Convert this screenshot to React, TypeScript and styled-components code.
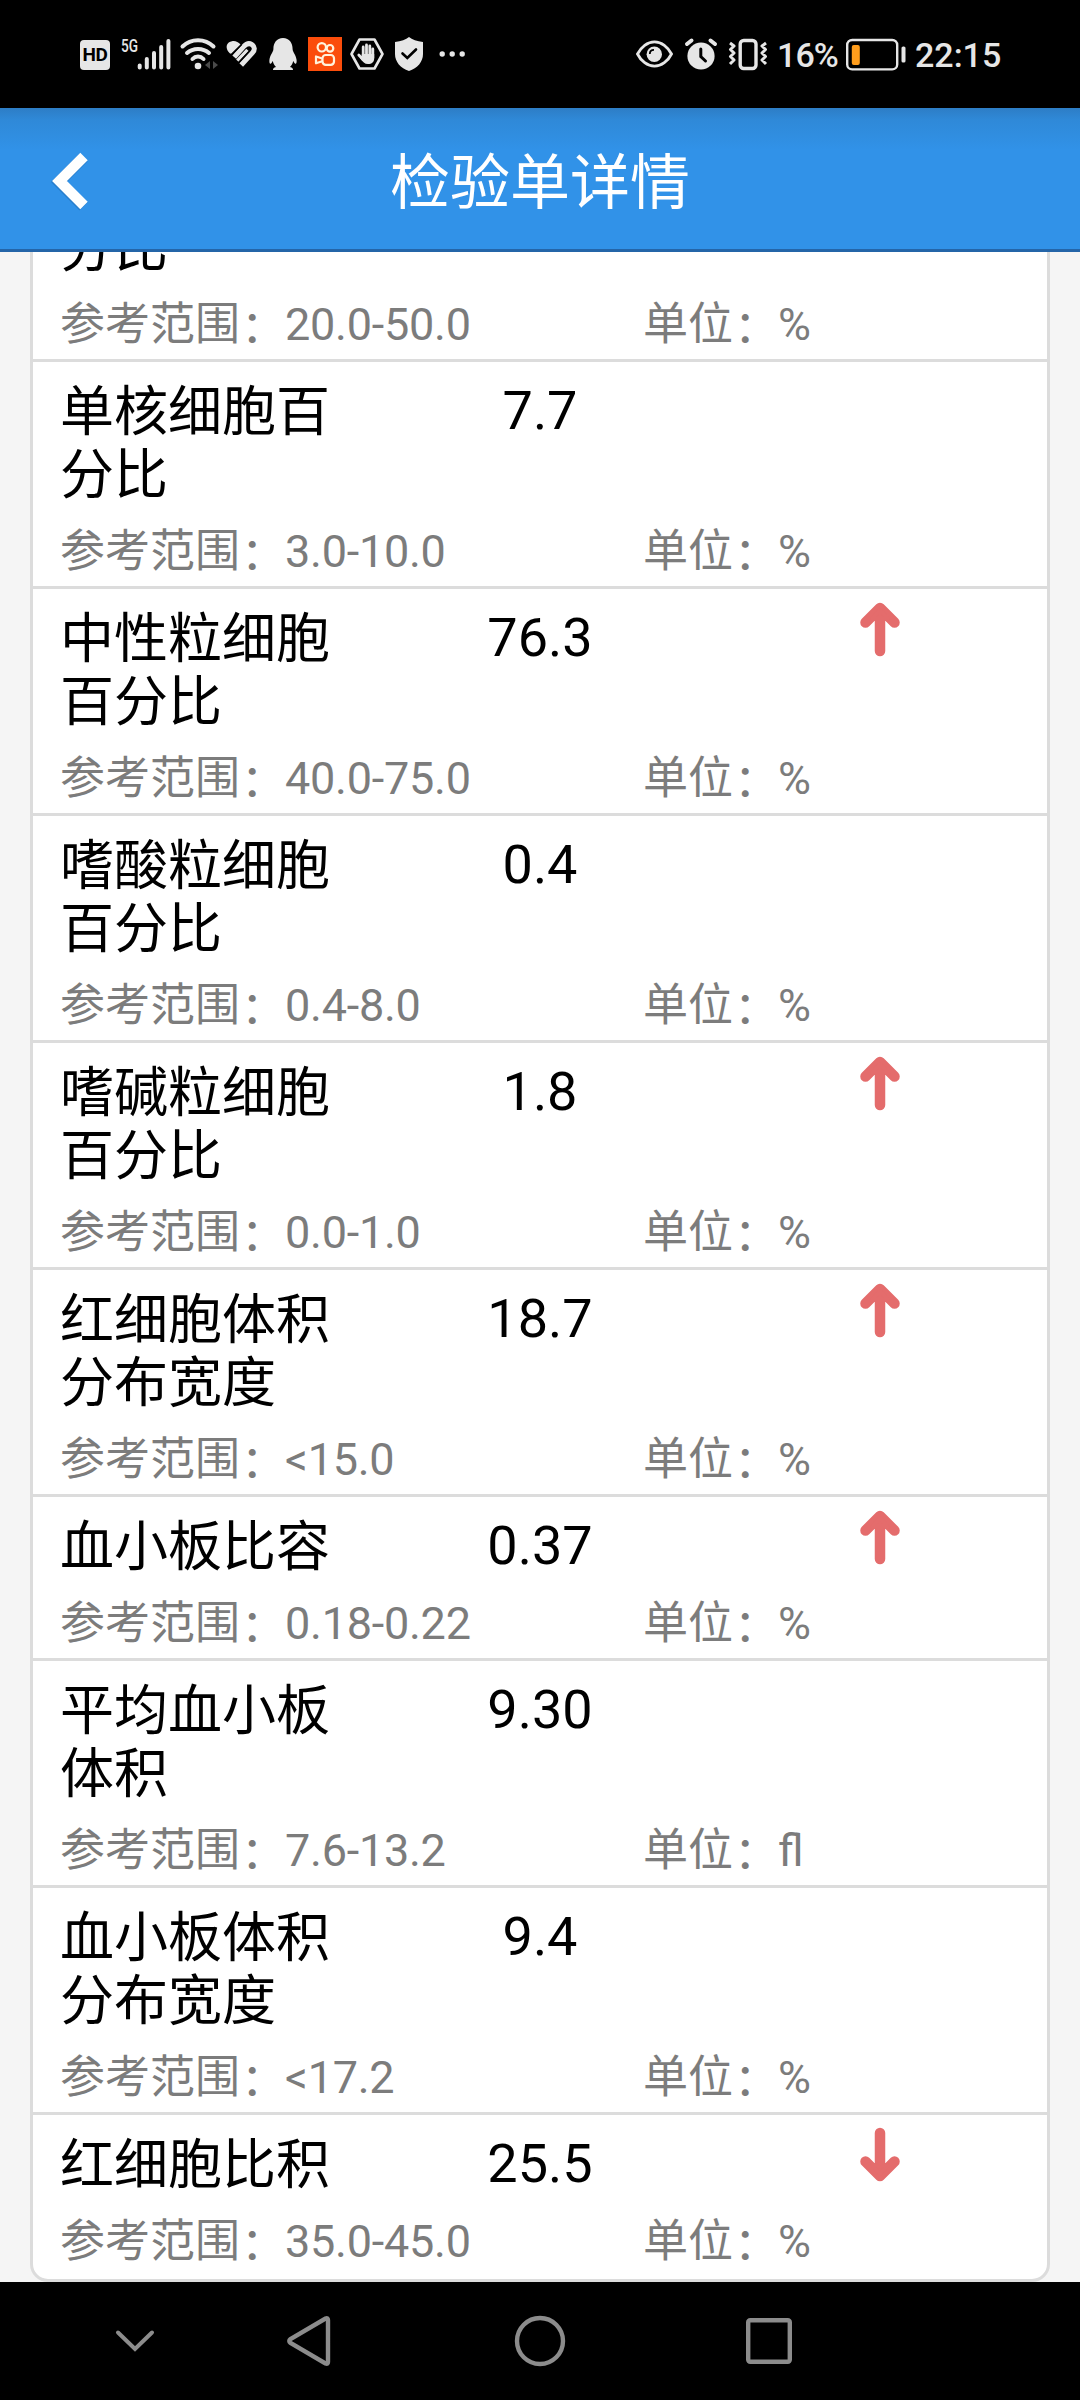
import React from "react";
import styled, { createGlobalStyle } from "styled-components";

const GlobalStyle = createGlobalStyle`
  html, body { margin: 0; padding: 0; background: #000; }
  *, *::before, *::after { box-sizing: border-box; }
`;

const Screen = styled.div`
  width: 1080px;
  height: 2400px;
  display: flex;
  flex-direction: column;
  overflow: hidden;
  background: #000;
  font-family: Roboto, "Noto Sans CJK SC", sans-serif;
`;

const StatusBar = styled.div`
  flex: none;
  height: 108px;
  padding: 0 80px;
  display: flex;
  justify-content: space-between;
  align-items: center;
  color: #e6e6e6;
`;

const StatusGroup = styled.div`
  display: flex;
  align-items: center;
  height: 34px;
`;

const Glyph = styled.svg<{ $gap?: number }>`
  display: block;
  flex: none;
  overflow: visible;
  margin-left: ${(p) => p.$gap ?? 0}px;
`;

const HdBadge = styled.span`
  width: 30px;
  height: 30px;
  margin-top: 2px;
  border-radius: 4px;
  background: #e6e6e6;
  color: #000;
  display: flex;
  align-items: center;
  justify-content: center;
  font-size: 19px;
  letter-spacing: -0.5px;
  font-weight: 700;
  line-height: 30px;
`;

const StatusText = styled.span<{ $gap: number; $width: number; $tracking?: number }>`
  margin-left: ${(p) => p.$gap}px;
  width: ${(p) => p.$width}px;
  font-size: 34px;
  line-height: 40px;
  padding-top: 2px;
  font-weight: 500;
  letter-spacing: ${(p) => p.$tracking ?? 0}px;
  white-space: nowrap;
`;

const Header = styled.header`
  flex: none;
  height: 144px;
  border-bottom: 3px solid #2465a8;
  background: linear-gradient(#2d7dc6 0, #2f89d8 12px, #3192e8 42px);
  display: grid;
  grid-template-columns: 140px 1fr 140px;
  align-items: center;
`;

const BackButton = styled.button`
  border: 0;
  padding: 5px 0 0 50px;
  background: none;
  display: flex;
`;

const Title = styled.h1`
  margin: 0;
  padding-top: 11px;
  text-align: center;
  color: #fff;
  font-size: 60px;
  line-height: 72px;
  font-weight: 400;
`;

const Viewport = styled.main`
  flex: none;
  height: 2030px;
  padding: 0 30px;
  background: #f5f5f5;
  overflow: hidden;
  display: flex;
  flex-direction: column;
  justify-content: flex-end;
`;

const Card = styled.section`
  flex: none;
  border: 3px solid #dcdcdc;
  border-radius: 18px;
  background: #fff;
`;

const Row = styled.article`
  padding: 17px 27px 8px;
  border-bottom: 3px solid #dcdcdc;
  &:last-child {
    border-bottom-color: transparent;
  }
`;

const Result = styled.div`
  display: grid;
  grid-template-columns: 290px 380px 1fr;
  align-items: start;
  color: #000;
  font-size: 54px;
  line-height: 63px;
`;

const Name = styled.div`
  padding-top: 2px;
  margin-bottom: -2px;
  white-space: pre-line;
`;

const Value = styled.div`
  text-align: center;
`;

const Flag = styled.div`
  height: 54px;
  margin-top: -4px;
  padding-left: 130px;
`;

const Meta = styled.div`
  display: grid;
  grid-template-columns: 583px 1fr;
  margin-top: 20px;
  color: #7c7c7c;
  font-size: 45px;
  line-height: 53px;
  white-space: nowrap;
`;

const Colon = styled.span`
  display: inline-block;
  transform: translate(1px, 3px);
`;

const Figures = styled.span`
  letter-spacing: -0.25px;
`;

const NavBar = styled.nav`
  flex: none;
  height: 118px;
  padding-left: 116px;
  display: flex;
  align-items: center;
`;

type Item = {
  name: string;
  value?: string;
  range: string;
  unit: string;
  flag?: "up" | "down";
};

const items: Item[] = [
  { name: "分比", range: "20.0-50.0", unit: "%" },
  { name: "单核细胞百\n分比", value: "7.7", range: "3.0-10.0", unit: "%" },
  { name: "中性粒细胞\n百分比", value: "76.3", range: "40.0-75.0", unit: "%", flag: "up" },
  { name: "嗜酸粒细胞\n百分比", value: "0.4", range: "0.4-8.0", unit: "%" },
  { name: "嗜碱粒细胞\n百分比", value: "1.8", range: "0.0-1.0", unit: "%", flag: "up" },
  { name: "红细胞体积\n分布宽度", value: "18.7", range: "<15.0", unit: "%", flag: "up" },
  { name: "血小板比容", value: "0.37", range: "0.18-0.22", unit: "%", flag: "up" },
  { name: "平均血小板\n体积", value: "9.30", range: "7.6-13.2", unit: "fl" },
  { name: "血小板体积\n分布宽度", value: "9.4", range: "<17.2", unit: "%" },
  { name: "红细胞比积", value: "25.5", range: "35.0-45.0", unit: "%", flag: "down" },
];

const Arrow = ({ down }: { down: boolean }) => (
  <Glyph width="40" height="54" viewBox="0 0 40 54">
    <g
      transform={down ? "matrix(1 0 0 -1 0 54)" : undefined}
      stroke="#e46c6c"
      strokeWidth="10.5"
      strokeLinecap="round"
      strokeLinejoin="round"
      fill="none"
    >
      <path d="M20 9V49" />
      <path d="M5.5 20.5 20 6 34.5 20.5" />
      <path d="M12 17 20 8 28 17Z" fill="#e46c6c" strokeWidth="4" />
    </g>
  </Glyph>
);

const LeftStatus = () => (
  <StatusGroup>
    <HdBadge>HD</HdBadge>
    <Glyph $gap={10} width="52" height="34" viewBox="0 0 52 34">
      <text x="1" y="15" fontSize="18" fontWeight="500" fill="#e6e6e6" textLength="17" lengthAdjust="spacingAndGlyphs">
        5G
      </text>
      <g stroke="#e6e6e6" strokeWidth="4" strokeLinecap="round">
        <path d="M19.7 28.5V30.5M26.8 22V30.5M34 16V30.5M41.2 10V30.5M48.4 4V30.5" />
      </g>
    </Glyph>
    <Glyph $gap={8} width="38" height="34" viewBox="0 0 38 34">
      <g fill="none" stroke="#e6e6e6" strokeWidth="4" strokeLinecap="round">
        <path d="M2.5 9.5C11 1 25 1 33.5 9.5" />
        <path d="M7 16C13 10.5 23 10.5 29 16" />
        <path d="M12.5 22C15.5 18.8 20.5 18.8 23.5 22" />
      </g>
      <circle cx="18" cy="29" r="3.3" fill="#e6e6e6" />
      <path d="M30 24V32L25 28ZM33 24V32L38 28Z" fill="#4a4a4a" />
    </Glyph>
    <Glyph $gap={8} width="31" height="34" viewBox="0 0 31 34">
      <path d="M2.6 15C-1.2 10 .8 5 6 4.2C9.500 3.600 12 5 14.600 7.400L5.400 16.600Q4 17 2.600 15Z" fill="#e6e6e6" />
      <path d="M8.200 20.200 17.600 9.600C20 7 23 5.800 25.600 7.400C29 9.600 29 13 26.600 15.600L15.200 28" fill="none" stroke="#e6e6e6" strokeWidth="5" />
      <path d="M11.300 23.600 21.500 12.800" stroke="#e6e6e6" strokeWidth="3.200" />
      <path d="M12.800 25.400 23 14.400M5.600 17.800 15.600 7.400" stroke="#000" strokeWidth="1.400" />
    </Glyph>
    <Glyph $gap={12} width="28" height="34" viewBox="0 0 28 34">
      <path
        fill="#e6e6e6"
        d="M14 1C7.5 1 4.4 6 4.4 12C4.4 15 1 18 .4 23C.2 26 .8 27.2 1.7 26.7C2.5 26.3 3.4 24.5 3.8 24C4.4 27 5.5 28.5 7 30C4.5 30.8 4 31.5 4 33H24C24 31.5 23.5 30.8 21 30C22.5 28.5 23.6 27 24.2 24C24.6 24.5 25.5 26.3 26.3 26.7C27.2 27.2 27.8 26 27.6 23C27 18 23.6 15 23.6 12C23.6 6 20.5 1 14 1Z"
      />
    </Glyph>
    <Glyph $gap={11} width="34" height="34" viewBox="0 0 34 34">
      <rect width="34" height="34" fill="#fb4d0b" />
      <g fill="none" stroke="#fff3dc" strokeWidth="2.2" strokeLinejoin="round">
        <circle cx="13.8" cy="10.3" r="4.2" />
        <circle cx="22" cy="11.3" r="3.3" />
        <rect x="14.5" y="18" width="11.5" height="9.8" rx="3.2" />
        <path d="M14.2 21.5 8 19.5V26.3L14.2 24.3" />
      </g>
    </Glyph>
    <Glyph $gap={8} width="34" height="34" viewBox="0 0 34 34">
      <path d="M9.5 2.5H24.5L32.5 17L24.5 31.5H9.5L1.5 17Z" fill="none" stroke="#e6e6e6" strokeWidth="2.6" strokeLinejoin="round" />
      <g stroke="#e6e6e6" strokeWidth="2.8" strokeLinecap="round">
        <path d="M13.2 10V20M16.5 8V20M19.8 9V20M22.8 12V21M8.8 18 13 22.5" />
      </g>
      <path d="M11.8 17H24.2V21C24.2 25 22 27 18 27C14.5 27 13 25 10 21L11.8 21Z" fill="#e6e6e6" />
    </Glyph>
    <Glyph $gap={10} width="30" height="34" viewBox="0 0 30 34">
      <path d="M15 0C18 2.5 23 4.3 29 5V17C29 25 23.5 31 15 34C6.5 31 1 25 1 17V5C7 4.3 12 2.5 15 0Z" fill="#e6e6e6" />
      <path d="M8.5 16.5 13.3 21 22 12.5" fill="none" stroke="#000" strokeWidth="2.6" strokeLinecap="round" />
    </Glyph>
    <Glyph $gap={15} width="26" height="34" viewBox="0 0 26 34" fill="#e6e6e6">
      <circle cx="3.2" cy="17" r="2.7" />
      <circle cx="13.2" cy="17" r="2.7" />
      <circle cx="23.2" cy="17" r="2.7" />
    </Glyph>
  </StatusGroup>
);

const RightStatus = () => (
  <StatusGroup>
    <Glyph width="37" height="34" viewBox="0 0 37 34">
      <path d="M1.5 17C5 10 11.5 4.8 18.5 4.8S32 10 35.5 17C32 24 25.5 29.2 18.5 29.2S5 24 1.5 17Z" fill="none" stroke="#e6e6e6" strokeWidth="2.8" />
      <circle cx="18.3" cy="17.3" r="7.7" fill="#e6e6e6" />
      <path d="M13.8 17C13.8 14.5 15.5 12.8 18 12.8" fill="none" stroke="#000" strokeWidth="1.8" />
    </Glyph>
    <Glyph $gap={12} width="32" height="34" viewBox="0 0 32 34">
      <circle cx="16" cy="19" r="13.6" fill="#e6e6e6" />
      <path d="M15.8 12V19.5L20.5 24" fill="none" stroke="#000" strokeWidth="3" strokeLinecap="round" />
      <path d="M2 7 6.5 3.5M30 7 25.5 3.5" stroke="#e6e6e6" strokeWidth="4" strokeLinecap="round" />
    </Glyph>
    <Glyph $gap={12} width="38" height="34" viewBox="0 0 38 34">
      <g fill="none" stroke="#e6e6e6" strokeWidth="3.4">
        <rect x="11.2" y="3.5" width="15.8" height="28" rx="3.5" />
        <path
          d="M1 6 5 9 1.5 12.5 5 16 1.5 19.5 5 23 1 27M37 6 33 9 36.5 12.5 33 16 36.5 19.5 33 23 37 27"
          strokeWidth="3"
          strokeLinejoin="round"
        />
      </g>
    </Glyph>
    <StatusText $gap={10} $width={62} $tracking={-0.9}>16%</StatusText>
    <Glyph $gap={7} width="60" height="34" viewBox="0 0 60 34">
      <rect x="1.2" y="3" width="50" height="29.4" rx="5" fill="none" stroke="#e6e6e6" strokeWidth="2.4" />
      <rect x="5.8" y="8" width="8" height="20" rx="2" fill="#ff9d1c" />
      <rect x="55.5" y="9.500" width="4" height="16" rx="1.6" fill="#e6e6e6" />
    </Glyph>
    <StatusText $gap={9} $width={85}>22:15</StatusText>
  </StatusGroup>
);

export default function App() {
  return (
    <Screen>
      <GlobalStyle />
      <StatusBar>
        <LeftStatus />
        <RightStatus />
      </StatusBar>
      <Header>
        <BackButton aria-label="返回">
          <Glyph width="40" height="60" viewBox="0 0 40 60">
            <path d="M33.5 6.5 9 31 33.5 55.500" fill="none" stroke="#1b5c9d" strokeOpacity=".35" strokeWidth="11.5" />
            <path d="M34 5.5 9.5 30 34 54.5" fill="none" stroke="#fff" strokeWidth="10.5" />
          </Glyph>
        </BackButton>
        <Title>检验单详情</Title>
      </Header>
      <Viewport>
        <Card>
          {items.map((item) => (
            <Row key={item.name + item.range}>
              <Result>
                <Name>{item.name}</Name>
                <Value>{item.value}</Value>
                {item.flag && (
                  <Flag>
                    <Arrow down={item.flag === "down"} />
                  </Flag>
                )}
              </Result>
              <Meta>
                <span>
                  参考范围<Colon>：</Colon>
                  <Figures>{item.range}</Figures>
                </span>
                <span>
                  单位<Colon>：</Colon>
                  {item.unit}
                </span>
              </Meta>
            </Row>
          ))}
        </Card>
      </Viewport>
      <NavBar>
        <Glyph width="38" height="50" viewBox="0 0 38 50" fill="none" stroke="#8c8c8c" strokeWidth="4">
          <path d="M2 16.5 19 33 36 16.5" strokeLinecap="round" />
        </Glyph>
        <Glyph $gap={133} width="43" height="50" viewBox="0 0 43 50" fill="none" stroke="#8c8c8c" strokeWidth="4.4">
          <path d="M38.500 2.500Q41 1.500 41 4V46Q41 48.500 38.500 47.500L3.500 27Q1 25 3.500 23Z" />
        </Glyph>
        <Glyph $gap={185} width="50" height="50" viewBox="0 0 50 50" fill="none" stroke="#8c8c8c" strokeWidth="4.4">
          <circle cx="25" cy="25" r="23" />
        </Glyph>
        <Glyph $gap={181} width="46" height="50" viewBox="0 0 46 50" fill="none" stroke="#8c8c8c" strokeWidth="4.4">
          <rect x="2.2" y="4.2" width="41.6" height="41.6" rx="2" />
        </Glyph>
      </NavBar>
    </Screen>
  );
}
